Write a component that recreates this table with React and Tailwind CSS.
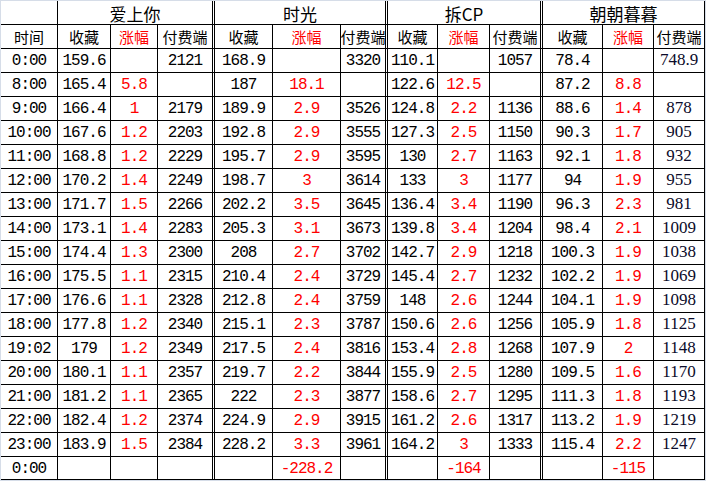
import React from 'react';

const ROWS = [
  ['0:00', '159.6', '', '2121', '168.9', '', '3320', '110.1', '', '1057', '78.4', '', '748.9'],
  ['8:00', '165.4', '5.8', '', '187', '18.1', '', '122.6', '12.5', '', '87.2', '8.8', ''],
  ['9:00', '166.4', '1', '2179', '189.9', '2.9', '3526', '124.8', '2.2', '1136', '88.6', '1.4', '878'],
  ['10:00', '167.6', '1.2', '2203', '192.8', '2.9', '3555', '127.3', '2.5', '1150', '90.3', '1.7', '905'],
  ['11:00', '168.8', '1.2', '2229', '195.7', '2.9', '3595', '130', '2.7', '1163', '92.1', '1.8', '932'],
  ['12:00', '170.2', '1.4', '2249', '198.7', '3', '3614', '133', '3', '1177', '94', '1.9', '955'],
  ['13:00', '171.7', '1.5', '2266', '202.2', '3.5', '3645', '136.4', '3.4', '1190', '96.3', '2.3', '981'],
  ['14:00', '173.1', '1.4', '2283', '205.3', '3.1', '3673', '139.8', '3.4', '1204', '98.4', '2.1', '1009'],
  ['15:00', '174.4', '1.3', '2300', '208', '2.7', '3702', '142.7', '2.9', '1218', '100.3', '1.9', '1038'],
  ['16:00', '175.5', '1.1', '2315', '210.4', '2.4', '3729', '145.4', '2.7', '1232', '102.2', '1.9', '1069'],
  ['17:00', '176.6', '1.1', '2328', '212.8', '2.4', '3759', '148', '2.6', '1244', '104.1', '1.9', '1098'],
  ['18:00', '177.8', '1.2', '2340', '215.1', '2.3', '3787', '150.6', '2.6', '1256', '105.9', '1.8', '1125'],
  ['19:02', '179', '1.2', '2349', '217.5', '2.4', '3816', '153.4', '2.8', '1268', '107.9', '2', '1148'],
  ['20:00', '180.1', '1.1', '2357', '219.7', '2.2', '3844', '155.9', '2.5', '1280', '109.5', '1.6', '1170'],
  ['21:00', '181.2', '1.1', '2365', '222', '2.3', '3877', '158.6', '2.7', '1295', '111.3', '1.8', '1193'],
  ['22:00', '182.4', '1.2', '2374', '224.9', '2.9', '3915', '161.2', '2.6', '1317', '113.2', '1.9', '1219'],
  ['23:00', '183.9', '1.5', '2384', '228.2', '3.3', '3961', '164.2', '3', '1333', '115.4', '2.2', '1247'],
  ['0:00', '', '', '', '', '-228.2', '', '', '-164', '', '', '-115', ''],
];

const GROUPS = ['爱上你', '时光', '拆CP', '朝朝暮暮'];
const SUB = ['收藏', '涨幅', '付费端'];

// columns that end a group get the double rule
const DOUBLE = [3, 6, 9];
const RED = [2, 5, 8, 11];

const CJK = "font-['Noto_Sans_CJK_SC',sans-serif]";

function Cell({ col, last, children, className = '' }) {
  const right = DOUBLE.includes(col) ? 'border-r-[3px] border-r-black border-double' : 'border-r border-r-black';
  return (
    <div
      className={`flex items-center justify-center border-b border-b-black leading-none overflow-hidden whitespace-nowrap ${right} ${last ? 'h-[23px]' : 'h-[24px]'} ${className}`}
    >
      {children}
    </div>
  );
}

function valueClass(ci) {
  if (ci === 12) return "font-['Liberation_Serif',serif] text-[17px] text-[#0b0b2a] pb-[2px]";
  const color = RED.includes(ci) ? 'text-[#ff0000]' : 'text-black';
  return `font-['Liberation_Mono',monospace] text-[16px] tracking-[-1px] pt-[1px] ${color}`;
}

export default function App() {
  return (
    <div className="w-[706px] h-[481px] bg-[#d6dde8] pl-[1px] pt-[1px] overflow-hidden">
      <div className="grid grid-cols-[57px_53px_47px_57px_58px_68px_47px_50px_52px_53px_60px_51px_51px] bg-white w-[704px]">
        <Cell col={0} />
        {GROUPS.map((g, i) => (
          <Cell key={g} col={i * 3 + 3} className={`col-span-3 text-[17px] text-black pt-[1px] ${CJK}`}>
            {g}
          </Cell>
        ))}

        <Cell col={0} className={`text-[15px] text-black ${CJK}`}>时间</Cell>
        {GROUPS.map((g, gi) =>
          SUB.map((s, si) => (
            <Cell
              key={g + s}
              col={gi * 3 + si + 1}
              className={`text-[15px] ${CJK} ${si === 1 ? 'text-[#ff0000]' : 'text-black'}`}
            >
              {s}
            </Cell>
          ))
        )}

        {ROWS.map((row, ri) =>
          row.map((v, ci) => (
            <Cell key={ri + '-' + ci} col={ci} last={ri === ROWS.length - 1} className={valueClass(ci)}>
              {v}
            </Cell>
          ))
        )}
      </div>
    </div>
  );
}
